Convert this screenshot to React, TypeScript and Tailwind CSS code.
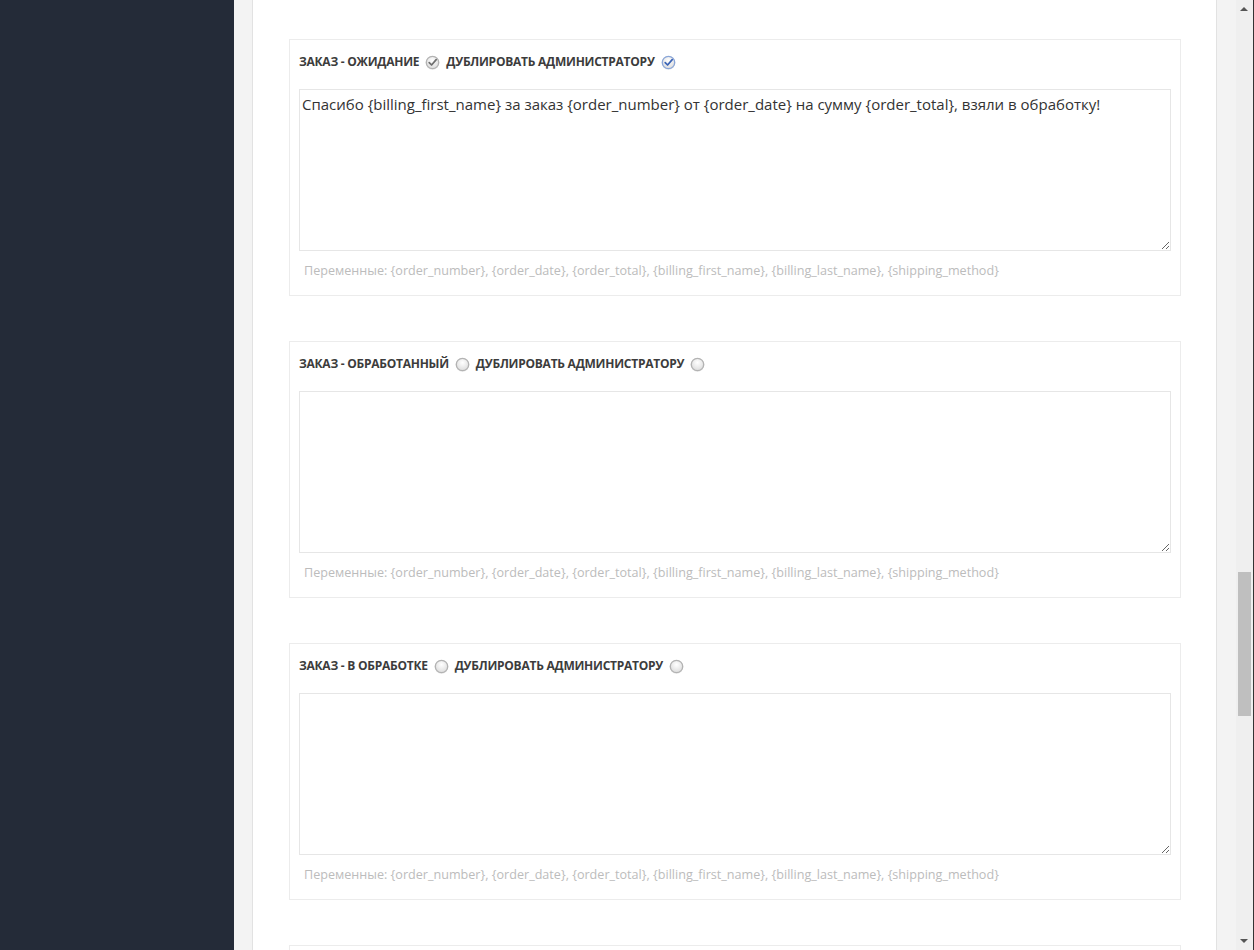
import React from "react";

const VARS =
  "Переменные: {order_number}, {order_date}, {order_total}, {billing_first_name}, {billing_last_name}, {shipping_method}";

function Check({ checked, blue }: { checked: boolean; blue?: boolean }) {
  return (
    <span className="inline-flex h-[15px] w-[15px] items-center justify-center">
      <svg width="15" height="15" viewBox="0 0 15 15">
        <defs>
          <radialGradient id="cg" cx="50%" cy="35%" r="65%">
            <stop offset="0%" stopColor="#ffffff" />
            <stop offset="100%" stopColor="#dcdcdc" />
          </radialGradient>
        </defs>
        <circle cx="7.5" cy="7.8" r="6.9" fill="#e8e8e8" />
        <circle
          cx="7.5"
          cy="7.5"
          r="6.2"
          fill="url(#cg)"
          stroke={blue ? "#8aa6d8" : "#b3b3b3"}
          strokeWidth="1.3"
        />
        {checked && (
          <path
            d="M4.2 7.6 L6.6 10 L11.2 4.6"
            fill="none"
            stroke={blue ? "#3a63b5" : "#6e6e6e"}
            strokeWidth="1.7"
            strokeLinecap="round"
            strokeLinejoin="round"
          />
        )}
      </svg>
    </span>
  );
}

function Card({
  title,
  checked,
  text,
}: {
  title: string;
  checked: boolean;
  text?: string;
}) {
  return (
    <div className="border border-[#ececec] bg-white px-[9px] pt-[10px] pb-[14px]">
      <div className="flex h-[24px] items-center gap-[6px] text-[12px] font-bold tracking-[-0.25px] uppercase text-[#3c3c3c] [font-family:'Open_Sans',sans-serif]">
        <span>{title}</span>
        <Check checked={checked} />
        <span>Дублировать администратору</span>
        <Check checked={checked} blue={checked} />
      </div>
      <textarea
        defaultValue={text}
        className="mt-[15px] block h-[162px] w-full resize-y border border-[#e6e6e6] bg-white px-[2px] pt-[3px] text-[15px] leading-[22px] text-[#333] outline-none [font-family:'Open_Sans',sans-serif]"
      />
      <div className="mt-[10px] h-[20px] pl-[5px] text-[12.6px] leading-[20px] text-[#bcbcbc] [font-family:'Open_Sans',sans-serif]">
        {VARS}
      </div>
    </div>
  );
}

export default function App() {
  return (
    <div className="flex h-[950px] w-[1254px] overflow-hidden bg-[#f3f3f3]">
      <aside className="h-full w-[234px] shrink-0 bg-[#242b38]" />
      <div className="w-[18px] shrink-0 bg-[#f3f3f3]" />
      <main className="h-full w-[965px] shrink-0 border-x border-[#e2e2e2] bg-white">
        <div className="flex flex-col gap-[45px] pl-[36px] pt-[39px] pr-[35px]">
          <Card
            title="Заказ - ожидание"
            checked
            text="Спасибо {billing_first_name} за заказ {order_number} от {order_date} на сумму {order_total}, взяли в обработку!"
          />
          <Card title="Заказ - обработанный" checked={false} />
          <Card title="Заказ - в обработке" checked={false} />
          <div className="h-[60px] border border-[#ececec] bg-white" />
        </div>
      </main>
      <div className="w-[19px] shrink-0 bg-[#f3f3f3]" />
      <div className="relative h-full w-[17px] shrink-0 bg-[#efefef]">
        <div className="absolute left-[4px] top-[7px] h-0 w-0 border-x-[4px] border-b-[4px] border-x-transparent border-b-[#555]" />
        <div className="absolute left-[2px] top-[572px] h-[144px] w-[13px] bg-[#bfbfbf]" />
        <div className="absolute bottom-[7px] left-[4px] h-0 w-0 border-x-[4px] border-t-[4px] border-x-transparent border-t-[#555]" />
      </div>
      <div className="w-[1px] shrink-0 bg-[#333]" />
    </div>
  );
}
